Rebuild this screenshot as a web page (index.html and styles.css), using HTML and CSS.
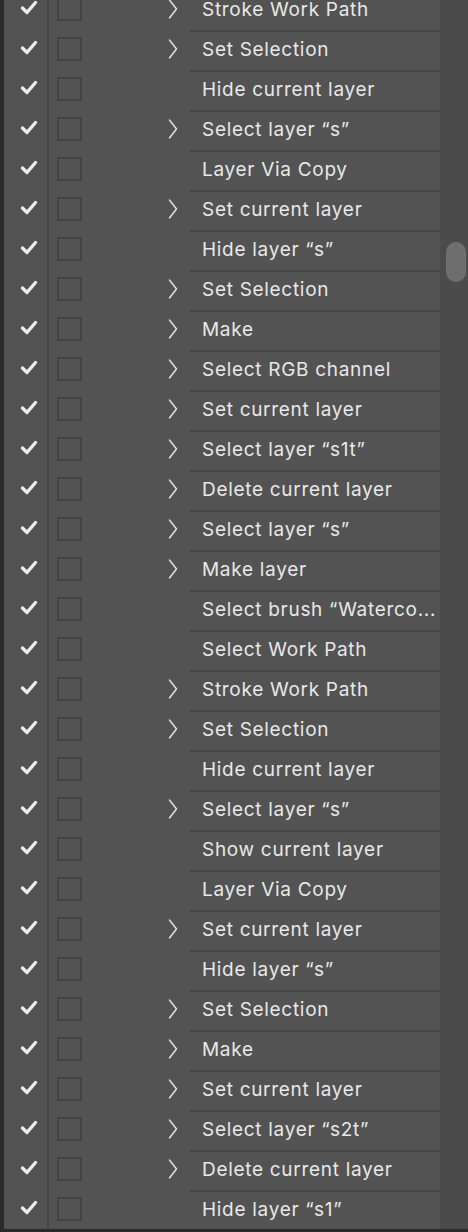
FILE: index.html
```html
<!DOCTYPE html>
<html>
<head>
<meta charset="utf-8">
<link rel="stylesheet" href="styles.css">
</head>
<body>
<div class="panel">
  <div class="list" id="list">
    <div class="row"><div class="check"><svg viewBox="0 0 18 15"><polyline points="2.5,8 7,12.5 15.5,2.5"/></svg></div><div class="toggle"><span class="box"></span><svg class="chev" viewBox="0 0 10 20"><polyline points="1.5,1 8.5,10 1.5,19"/></svg></div><div class="name">Stroke Work Path</div></div>
    <div class="row"><div class="check"><svg viewBox="0 0 18 15"><polyline points="2.5,8 7,12.5 15.5,2.5"/></svg></div><div class="toggle"><span class="box"></span><svg class="chev" viewBox="0 0 10 20"><polyline points="1.5,1 8.5,10 1.5,19"/></svg></div><div class="name">Set Selection</div></div>
    <div class="row"><div class="check"><svg viewBox="0 0 18 15"><polyline points="2.5,8 7,12.5 15.5,2.5"/></svg></div><div class="toggle"><span class="box"></span></div><div class="name">Hide current layer</div></div>
    <div class="row"><div class="check"><svg viewBox="0 0 18 15"><polyline points="2.5,8 7,12.5 15.5,2.5"/></svg></div><div class="toggle"><span class="box"></span><svg class="chev" viewBox="0 0 10 20"><polyline points="1.5,1 8.5,10 1.5,19"/></svg></div><div class="name">Select layer “s”</div></div>
    <div class="row"><div class="check"><svg viewBox="0 0 18 15"><polyline points="2.5,8 7,12.5 15.5,2.5"/></svg></div><div class="toggle"><span class="box"></span></div><div class="name">Layer Via Copy</div></div>
    <div class="row"><div class="check"><svg viewBox="0 0 18 15"><polyline points="2.5,8 7,12.5 15.5,2.5"/></svg></div><div class="toggle"><span class="box"></span><svg class="chev" viewBox="0 0 10 20"><polyline points="1.5,1 8.5,10 1.5,19"/></svg></div><div class="name">Set current layer</div></div>
    <div class="row"><div class="check"><svg viewBox="0 0 18 15"><polyline points="2.5,8 7,12.5 15.5,2.5"/></svg></div><div class="toggle"><span class="box"></span></div><div class="name">Hide layer “s”</div></div>
    <div class="row"><div class="check"><svg viewBox="0 0 18 15"><polyline points="2.5,8 7,12.5 15.5,2.5"/></svg></div><div class="toggle"><span class="box"></span><svg class="chev" viewBox="0 0 10 20"><polyline points="1.5,1 8.5,10 1.5,19"/></svg></div><div class="name">Set Selection</div></div>
    <div class="row"><div class="check"><svg viewBox="0 0 18 15"><polyline points="2.5,8 7,12.5 15.5,2.5"/></svg></div><div class="toggle"><span class="box"></span><svg class="chev" viewBox="0 0 10 20"><polyline points="1.5,1 8.5,10 1.5,19"/></svg></div><div class="name">Make</div></div>
    <div class="row"><div class="check"><svg viewBox="0 0 18 15"><polyline points="2.5,8 7,12.5 15.5,2.5"/></svg></div><div class="toggle"><span class="box"></span><svg class="chev" viewBox="0 0 10 20"><polyline points="1.5,1 8.5,10 1.5,19"/></svg></div><div class="name">Select RGB channel</div></div>
    <div class="row"><div class="check"><svg viewBox="0 0 18 15"><polyline points="2.5,8 7,12.5 15.5,2.5"/></svg></div><div class="toggle"><span class="box"></span><svg class="chev" viewBox="0 0 10 20"><polyline points="1.5,1 8.5,10 1.5,19"/></svg></div><div class="name">Set current layer</div></div>
    <div class="row"><div class="check"><svg viewBox="0 0 18 15"><polyline points="2.5,8 7,12.5 15.5,2.5"/></svg></div><div class="toggle"><span class="box"></span><svg class="chev" viewBox="0 0 10 20"><polyline points="1.5,1 8.5,10 1.5,19"/></svg></div><div class="name">Select layer “s1t”</div></div>
    <div class="row"><div class="check"><svg viewBox="0 0 18 15"><polyline points="2.5,8 7,12.5 15.5,2.5"/></svg></div><div class="toggle"><span class="box"></span><svg class="chev" viewBox="0 0 10 20"><polyline points="1.5,1 8.5,10 1.5,19"/></svg></div><div class="name">Delete current layer</div></div>
    <div class="row"><div class="check"><svg viewBox="0 0 18 15"><polyline points="2.5,8 7,12.5 15.5,2.5"/></svg></div><div class="toggle"><span class="box"></span><svg class="chev" viewBox="0 0 10 20"><polyline points="1.5,1 8.5,10 1.5,19"/></svg></div><div class="name">Select layer “s”</div></div>
    <div class="row"><div class="check"><svg viewBox="0 0 18 15"><polyline points="2.5,8 7,12.5 15.5,2.5"/></svg></div><div class="toggle"><span class="box"></span><svg class="chev" viewBox="0 0 10 20"><polyline points="1.5,1 8.5,10 1.5,19"/></svg></div><div class="name">Make layer</div></div>
    <div class="row"><div class="check"><svg viewBox="0 0 18 15"><polyline points="2.5,8 7,12.5 15.5,2.5"/></svg></div><div class="toggle"><span class="box"></span></div><div class="name">Select brush “Waterco...</div></div>
    <div class="row"><div class="check"><svg viewBox="0 0 18 15"><polyline points="2.5,8 7,12.5 15.5,2.5"/></svg></div><div class="toggle"><span class="box"></span></div><div class="name">Select Work Path</div></div>
    <div class="row"><div class="check"><svg viewBox="0 0 18 15"><polyline points="2.5,8 7,12.5 15.5,2.5"/></svg></div><div class="toggle"><span class="box"></span><svg class="chev" viewBox="0 0 10 20"><polyline points="1.5,1 8.5,10 1.5,19"/></svg></div><div class="name">Stroke Work Path</div></div>
    <div class="row"><div class="check"><svg viewBox="0 0 18 15"><polyline points="2.5,8 7,12.5 15.5,2.5"/></svg></div><div class="toggle"><span class="box"></span><svg class="chev" viewBox="0 0 10 20"><polyline points="1.5,1 8.5,10 1.5,19"/></svg></div><div class="name">Set Selection</div></div>
    <div class="row"><div class="check"><svg viewBox="0 0 18 15"><polyline points="2.5,8 7,12.5 15.5,2.5"/></svg></div><div class="toggle"><span class="box"></span></div><div class="name">Hide current layer</div></div>
    <div class="row"><div class="check"><svg viewBox="0 0 18 15"><polyline points="2.5,8 7,12.5 15.5,2.5"/></svg></div><div class="toggle"><span class="box"></span><svg class="chev" viewBox="0 0 10 20"><polyline points="1.5,1 8.5,10 1.5,19"/></svg></div><div class="name">Select layer “s”</div></div>
    <div class="row"><div class="check"><svg viewBox="0 0 18 15"><polyline points="2.5,8 7,12.5 15.5,2.5"/></svg></div><div class="toggle"><span class="box"></span></div><div class="name">Show current layer</div></div>
    <div class="row"><div class="check"><svg viewBox="0 0 18 15"><polyline points="2.5,8 7,12.5 15.5,2.5"/></svg></div><div class="toggle"><span class="box"></span></div><div class="name">Layer Via Copy</div></div>
    <div class="row"><div class="check"><svg viewBox="0 0 18 15"><polyline points="2.5,8 7,12.5 15.5,2.5"/></svg></div><div class="toggle"><span class="box"></span><svg class="chev" viewBox="0 0 10 20"><polyline points="1.5,1 8.5,10 1.5,19"/></svg></div><div class="name">Set current layer</div></div>
    <div class="row"><div class="check"><svg viewBox="0 0 18 15"><polyline points="2.5,8 7,12.5 15.5,2.5"/></svg></div><div class="toggle"><span class="box"></span></div><div class="name">Hide layer “s”</div></div>
    <div class="row"><div class="check"><svg viewBox="0 0 18 15"><polyline points="2.5,8 7,12.5 15.5,2.5"/></svg></div><div class="toggle"><span class="box"></span><svg class="chev" viewBox="0 0 10 20"><polyline points="1.5,1 8.5,10 1.5,19"/></svg></div><div class="name">Set Selection</div></div>
    <div class="row"><div class="check"><svg viewBox="0 0 18 15"><polyline points="2.5,8 7,12.5 15.5,2.5"/></svg></div><div class="toggle"><span class="box"></span><svg class="chev" viewBox="0 0 10 20"><polyline points="1.5,1 8.5,10 1.5,19"/></svg></div><div class="name">Make</div></div>
    <div class="row"><div class="check"><svg viewBox="0 0 18 15"><polyline points="2.5,8 7,12.5 15.5,2.5"/></svg></div><div class="toggle"><span class="box"></span><svg class="chev" viewBox="0 0 10 20"><polyline points="1.5,1 8.5,10 1.5,19"/></svg></div><div class="name">Set current layer</div></div>
    <div class="row"><div class="check"><svg viewBox="0 0 18 15"><polyline points="2.5,8 7,12.5 15.5,2.5"/></svg></div><div class="toggle"><span class="box"></span><svg class="chev" viewBox="0 0 10 20"><polyline points="1.5,1 8.5,10 1.5,19"/></svg></div><div class="name">Select layer “s2t”</div></div>
    <div class="row"><div class="check"><svg viewBox="0 0 18 15"><polyline points="2.5,8 7,12.5 15.5,2.5"/></svg></div><div class="toggle"><span class="box"></span><svg class="chev" viewBox="0 0 10 20"><polyline points="1.5,1 8.5,10 1.5,19"/></svg></div><div class="name">Delete current layer</div></div>
    <div class="row"><div class="check"><svg viewBox="0 0 18 15"><polyline points="2.5,8 7,12.5 15.5,2.5"/></svg></div><div class="toggle"><span class="box"></span></div><div class="name">Hide layer “s1”</div></div>
  </div>
  <div class="scrollbar"><div class="thumb"></div></div>
</div>
</body>
</html>
```

FILE: styles.css
```css
html, body {
  margin: 0;
  padding: 0;
  background: #535353;
  overflow: hidden;
  height: 1232px;
}
.panel {
  display: flex;
  height: 1232px;
  overflow: hidden;
  border-left: 4px solid #2b2b2b;
  border-bottom: 3px solid #2b2b2b;
  box-sizing: border-box;
}
.list {
  width: 436px;
  margin-top: -10px;
  display: flex;
  flex-direction: column;
}
.row {
  display: flex;
  height: 40px;
  flex: none;
}
.check {
  width: 45px;
  border-right: 2px solid #464646;
  display: flex;
  align-items: center;
  justify-content: center;
  padding: 0 0 6px 7px;
  box-sizing: border-box;
}
.check svg {
  width: 18px;
  height: 15px;
  fill: none;
  stroke: #ececec;
  stroke-width: 3.4;
  stroke-linecap: round;
  stroke-linejoin: round;
}
.toggle {
  width: 141px;
  display: flex;
  align-items: center;
  padding: 0 0 2px 8px;
  box-sizing: border-box;
}
.box {
  width: 25px;
  height: 24px;
  box-sizing: border-box;
  border: 2px solid #434343;
  flex: none;
}
.chev {
  width: 10px;
  height: 20px;
  margin-left: 86px;
  fill: none;
  stroke: #e0e0e0;
  stroke-width: 1.5;
  stroke-linecap: round;
  stroke-linejoin: round;
}
.name {
  width: 250px;
  border-top: 2px solid #464646;
  box-sizing: border-box;
  display: flex;
  align-items: center;
  padding: 0 0 4px 12px;
  font-family: Inter, "Noto Sans", sans-serif;
  font-size: 19px;
  letter-spacing: 0.7px;
  color: #e8e8e8;
  white-space: nowrap;
  overflow: hidden;
}
.scrollbar {
  width: 28px;
  background: #4b4b4b;
  flex: none;
  padding: 242px 0 0 6px;
  box-sizing: border-box;
}
.thumb {
  width: 20px;
  height: 40px;
  border-radius: 10px;
  background: #6e6e6e;
}
```
